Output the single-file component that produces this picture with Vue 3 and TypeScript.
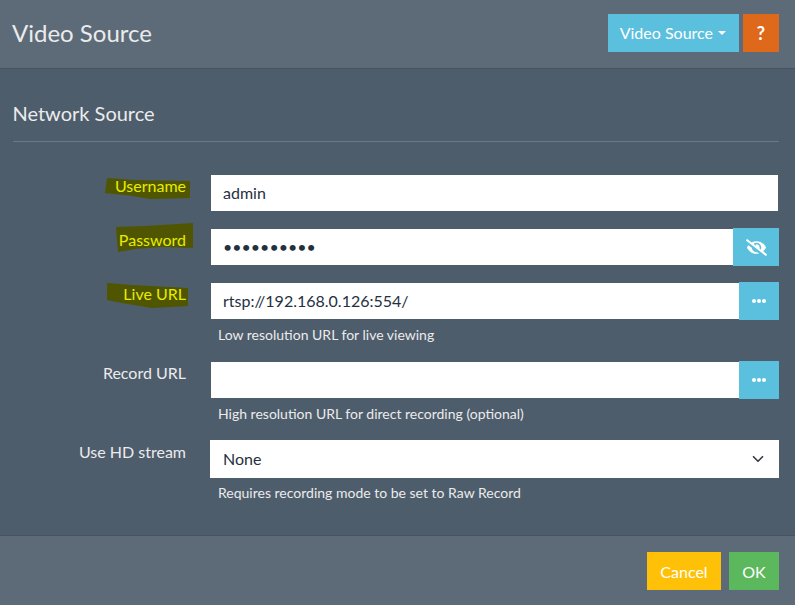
<template>
  <div class="dialog">
    <header class="dialog-header">
      <h1 class="dialog-title">Video Source</h1>
      <div class="header-actions">
        <button class="btn btn-info btn-source">Video Source<span class="caret"></span></button>
        <button class="btn btn-help">?</button>
      </div>
    </header>

    <main class="dialog-body">
      <h2 class="section-title">Network Source</h2>
      <hr class="divider" />

      <form class="source-form" @submit.prevent>
        <div class="form-row">
          <label class="form-label">
            <svg class="marker" viewBox="0 0 85 21" preserveAspectRatio="none">
              <polygon points="2,0 30,2 85,3 85,20 45,21 28,18 0,15" />
            </svg>
            <span class="marked">Username</span>
          </label>
          <div class="form-field">
            <input class="form-input" type="text" value="admin" />
          </div>
        </div>

        <div class="form-row">
          <label class="form-label">
            <svg class="marker marker-password" viewBox="0 0 77 29" preserveAspectRatio="none">
              <polygon points="0,4 30,3 77,0 77,25 45,24 20,26 2,29" />
            </svg>
            <span class="marked">Password</span>
          </label>
          <div class="form-field input-group">
            <input class="form-input" type="text" :value="passwordDots" />
            <button class="btn btn-info btn-addon btn-eye" type="button">
              <svg viewBox="0 0 640 512" width="21" height="17" fill="currentColor">
                <path d="M320 400c-75.85 0-137.25-58.71-142.9-133.11L72.2 185.82c-13.79 17.3-26.48 35.59-36.72 55.59a32.35 32.35 0 0 0 0 29.19C89.71 376.41 197.07 448 320 448c26.91 0 52.87-4 77.89-10.46L346 397.39a144.13 144.13 0 0 1-26 2.61zm313.82 58.1l-110.55-85.44a331.25 331.25 0 0 0 81.25-102.07 32.35 32.35 0 0 0 0-29.19C550.29 135.59 442.93 64 320 64a308.15 308.15 0 0 0-147.32 37.7L45.46 3.37A16 16 0 0 0 23 6.18L3.37 31.45A16 16 0 0 0 6.18 53.9l588.36 454.73a16 16 0 0 0 22.46-2.81l19.64-25.27a16 16 0 0 0-2.82-22.45zm-183.72-142l-39.3-30.38A94.75 94.75 0 0 0 416 256a94.76 94.76 0 0 0-121.31-92.21A47.65 47.65 0 0 1 304 192a46.64 46.64 0 0 1-1.54 10l-73.61-56.89A142.31 142.31 0 0 1 320 112a143.92 143.92 0 0 1 144 144c0 21.63-5.29 41.79-13.9 60.11z" />
              </svg>
            </button>
          </div>
        </div>

        <div class="form-row">
          <label class="form-label">
            <svg class="marker marker-live" viewBox="0 0 81 25" preserveAspectRatio="none">
              <polygon points="0,0 25,2 81,5 81,23 45,25 15,20 0,17" />
            </svg>
            <span class="marked">Live URL</span>
          </label>
          <div class="form-field">
            <div class="input-group">
              <input class="form-input" type="text" value="rtsp://192.168.0.126:554/" />
              <button class="btn btn-info btn-addon" type="button"><span class="dots"><i></i><i></i><i></i></span></button>
            </div>
            <small class="help-text">Low resolution URL for live viewing</small>
          </div>
        </div>

        <div class="form-row">
          <label class="form-label">Record URL</label>
          <div class="form-field">
            <div class="input-group">
              <input class="form-input" type="text" value="" />
              <button class="btn btn-info btn-addon" type="button"><span class="dots"><i></i><i></i><i></i></span></button>
            </div>
            <small class="help-text">High resolution URL for direct recording (optional)</small>
          </div>
        </div>

        <div class="form-row">
          <label class="form-label">Use HD stream</label>
          <div class="form-field">
            <div class="select-box">
              <span class="select-value">None</span>
              <svg viewBox="0 0 16 16" width="12" height="12" fill="none" stroke="#343a40" stroke-width="2.200" stroke-linecap="round" stroke-linejoin="round">
                <path d="M2 5l6 6 6-6" />
              </svg>
            </div>
            <small class="help-text">Requires recording mode to be set to Raw Record</small>
          </div>
        </div>
      </form>
    </main>

    <footer class="dialog-footer">
      <button class="btn btn-cancel">Cancel</button>
      <button class="btn btn-ok">OK</button>
    </footer>
  </div>
</template>

<script setup lang="ts">
const passwordLength = 10
const passwordDots = '•'.repeat(passwordLength)
</script>

<style scoped>
.dialog {
  display: flex;
  flex-direction: column;
  height: 605px;
  background: #4e5d6c;
  color: #ebebeb;
  font-family: Lato, "Liberation Sans", sans-serif;
  font-size: 16px;
  overflow: hidden;
}

.dialog-header {
  display: flex;
  align-items: center;
  justify-content: space-between;
  height: 66px;
  padding: 0 16px 2px 12px;
  background: #5d6b79;
  border-bottom: 1px solid #46535f;
}

.dialog-title {
  margin: 0 0 1px;
  font-size: 24px;
  font-weight: 400;
  color: #ebebeb;
}

.header-actions {
  display: flex;
  gap: 4px;
}

.btn {
  height: 38px;
  padding: 0 13px;
  border: none;
  border-radius: 0;
  color: #fff;
  font-family: inherit;
  font-size: 16px;
  cursor: pointer;
}

.btn-info {
  background: #5bc0de;
}

.btn-source {
  display: inline-flex;
  align-items: center;
  gap: 5px;
  padding: 0 13px 2px 12px;
}

.btn-help {
  width: 36px;
  padding: 0;
  background: #df691a;
  font-weight: 700;
  font-size: 18px;
}

.caret {
  margin-top: 2px;
  border-top: 4.500px solid #fff;
  border-left: 4.500px solid transparent;
  border-right: 4.500px solid transparent;
}

.dialog-body {
  flex: 1;
  padding: 0 16px 0 13px;
}

.section-title {
  margin: 0 0 0 -0.5px;
  padding-top: 32px;
  font-size: 20px;
  line-height: 24px;
  font-weight: 400;
  color: #ebebeb;
}

.divider {
  height: 1px;
  margin: 16px 0 32px;
  border: none;
  background: #6b7986;
}

.form-row {
  display: grid;
  grid-template-columns: 197px 1fr;
  margin-bottom: 16px;
}

.form-label {
  position: relative;
  padding: 0 24px 0 0;
  text-align: right;
  line-height: 24px;
}

.marked {
  position: relative;
  color: #e6ec00;
}

.marker {
  position: absolute;
  top: 4px;
  right: 20px;
  width: 85px;
  height: 21px;
  fill: #4f5500;
}

.marker-password {
  top: -5px;
  right: 17px;
  width: 77px;
  height: 29px;
}

.marker-live {
  top: 1px;
  right: 22px;
  width: 81px;
  height: 25px;
}

.input-group {
  display: flex;
}

.form-input {
  flex: 1;
  width: 100%;
  min-width: 0;
  height: 38px;
  box-sizing: border-box;
  padding: 0 12px 2px;
  border: 1px solid transparent;
  border-radius: 0;
  background: #fff;
  background-clip: padding-box;
  color: #25303f;
  font-family: inherit;
  font-size: 16px;
  outline: none;
  display: block;
}

.btn-addon {
  display: flex;
  align-items: center;
  justify-content: center;
  flex: none;
  width: 40px;
  margin-left: -1px;
  padding: 0;
}

.btn-eye {
  width: 46px;
}

.dots {
  display: flex;
  gap: 1px;
}

.dots i {
  width: 4px;
  height: 4px;
  border-radius: 50%;
  background: #fff;
}

.select-box {
  display: flex;
  align-items: center;
  justify-content: space-between;
  height: 38px;
  padding: 0 15px 0 13px;
  background: #fff;
  color: #25303f;
}

.select-value {
  margin-bottom: 2px;
}

.help-text {
  display: block;
  margin-top: 5px;
  margin-left: 8px;
  font-size: 14px;
  line-height: 20px;
  color: #ebebeb;
}

.dialog-footer {
  display: flex;
  align-items: center;
  justify-content: flex-end;
  gap: 8px;
  height: 68px;
  padding: 1px 16px 0 0;
  background: #5d6b79;
  border-top: 1px solid #46535f;
}

.btn-cancel {
  min-width: 74px;
  background: #ffc107;
}

.btn-ok {
  min-width: 50px;
  background: #5cb85c;
}
</style>

<style>
html, body {
  margin: 0;
  background: #4e5d6c;
}
</style>
